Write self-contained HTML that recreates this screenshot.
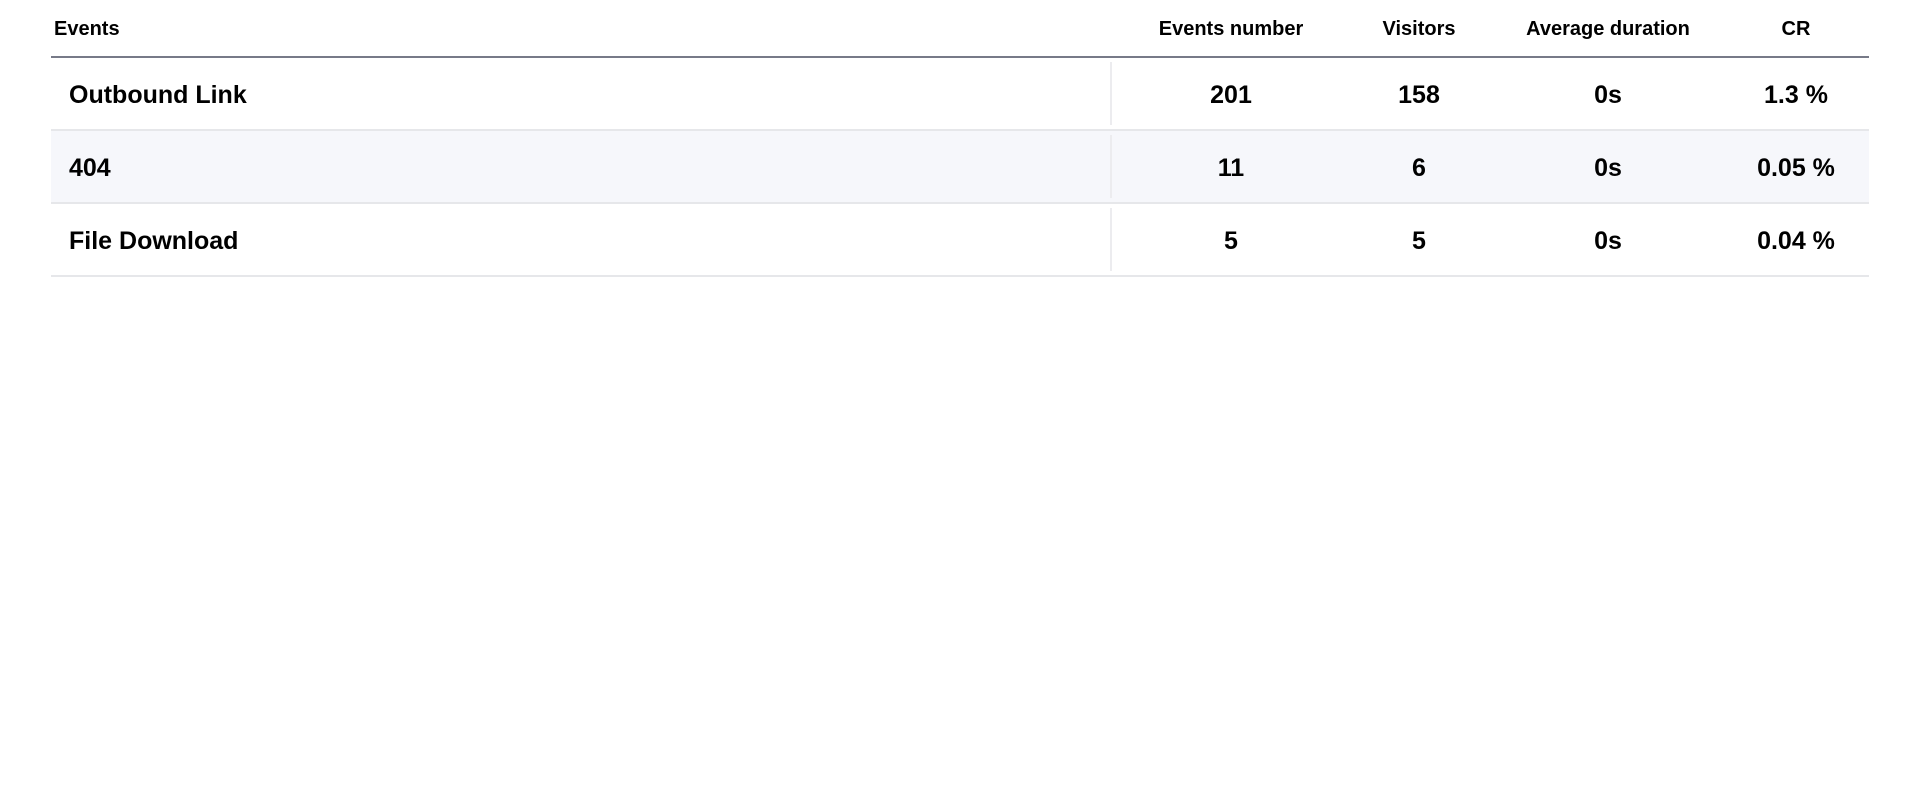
<!DOCTYPE html>
<html><head><meta charset="utf-8"><style>
*{margin:0;padding:0;box-sizing:border-box}
body{width:1920px;height:800px;background:#fff;font-family:"Liberation Sans",sans-serif;color:#000;position:relative;overflow:hidden}
.h{position:absolute;top:17px;font-size:20px;font-weight:bold;line-height:24px;white-space:nowrap}
.c{transform:translateX(-50%)}
.hl{position:absolute;left:51px;width:1818px;top:56px;height:2px;background:#777a88}
.row{position:absolute;left:51px;width:1818px;height:73px;border-bottom:2px solid #e6e7ea}
.row .sep{position:absolute;left:1059px;top:4px;bottom:4px;width:2px;background:#ececef}
.row span{position:absolute;top:23px;font-size:25px;font-weight:bold;line-height:28px;white-space:nowrap}
</style></head><body>
<div class="h" style="left:54px">Events</div>
<div class="h c" style="left:1231px">Events number</div>
<div class="h c" style="left:1419px">Visitors</div>
<div class="h c" style="left:1608px">Average duration</div>
<div class="h c" style="left:1796px">CR</div>
<div class="hl"></div>
<div class="row" style="top:58px"><div class="sep"></div><span style="left:18px">Outbound Link</span><span class="c" style="left:1180px">201</span><span class="c" style="left:1368px">158</span><span class="c" style="left:1557px">0s</span><span class="c" style="left:1745px">1.3 %</span></div>
<div class="row" style="top:131px;background:#f6f7fb"><div class="sep"></div><span style="left:18px">404</span><span class="c" style="left:1180px">11</span><span class="c" style="left:1368px">6</span><span class="c" style="left:1557px">0s</span><span class="c" style="left:1745px">0.05 %</span></div>
<div class="row" style="top:204px"><div class="sep"></div><span style="left:18px">File Download</span><span class="c" style="left:1180px">5</span><span class="c" style="left:1368px">5</span><span class="c" style="left:1557px">0s</span><span class="c" style="left:1745px">0.04 %</span></div>
</body></html>
